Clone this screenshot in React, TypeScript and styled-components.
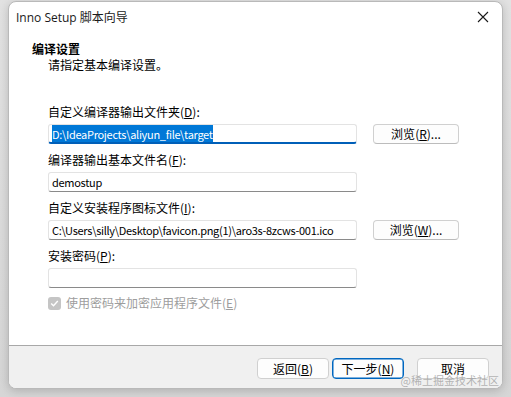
import React from 'react';
import styled, { createGlobalStyle } from 'styled-components';

const GlobalStyle = createGlobalStyle`
  html, body {
    margin: 0;
    padding: 0;
    background: #dadada;
  }
  body {
    font-family: 'Noto Sans CJK SC', 'Noto Sans', sans-serif;
    font-size: 12px;
    color: #000;
  }
`;

interface Field {
  label: string;
  key: string;
  value: string;
  selected?: boolean;
  browse?: string;
  browseKey?: string;
}

const fields: Field[] = [
  { label: '自定义编译器输出文件夹', key: 'D', value: 'D:\\IdeaProjects\\aliyun_file\\target', selected: true, browse: '浏览', browseKey: 'R' },
  { label: '编译器输出基本文件名', key: 'F', value: 'demostup' },
  { label: '自定义安装程序图标文件', key: 'I', value: 'C:\\Users\\silly\\Desktop\\favicon.png(1)\\aro3s-8zcws-001.ico', browse: '浏览', browseKey: 'W' },
  { label: '安装密码', key: 'P', value: '' },
];

export default function App() {
  return (
    <Screen>
      <GlobalStyle />
      <Window>
        <TitleBar>
          <TitleText>Inno Setup 脚本向导</TitleText>
          <CloseIcon width="12" height="12" viewBox="0 0 12 12">
            <path d="M1 1 L11 11 M11 1 L1 11" stroke="#1a1a1a" strokeWidth="1.1" fill="none" />
          </CloseIcon>
        </TitleBar>

        <Body>
          <Heading>编译设置</Heading>
          <SubHeading>请指定基本编译设置。</SubHeading>

          <Form>
            {fields.map((f) => (
              <React.Fragment key={f.key}>
                <Label>
                  {f.label}(<u>{f.key}</u>):
                </Label>
                <span />
                <Input $focused={f.selected}>
                  {f.selected ? <Selection>{f.value}</Selection> : f.value}
                </Input>
                {f.browse ? (
                  <BrowseButton>
                    {f.browse}(<u>{f.browseKey}</u>)...
                  </BrowseButton>
                ) : (
                  <span />
                )}
              </React.Fragment>
            ))}
          </Form>

          <CheckRow>
            <CheckBox>
              <svg width="9" height="9" viewBox="0 0 9 9">
                <path d="M1.2 4.6 L3.5 6.8 L7.8 2" stroke="#fff" strokeWidth="1.4" fill="none" />
              </svg>
            </CheckBox>
            <CheckLabel>
              使用密码来加密应用程序文件(<u>E</u>)
            </CheckLabel>
          </CheckRow>
        </Body>

        <Footer>
          <FooterButton>
            返回(<u>B</u>)
          </FooterButton>
          <FooterButton $primary>
            下一步(<u>N</u>)
          </FooterButton>
          <FooterButton $last>取消</FooterButton>
          <Watermark>@稀土掘金技术社区</Watermark>
        </Footer>
      </Window>
    </Screen>
  );
}

const Screen = styled.div`
  width: 511px;
  height: 397px;
  padding: 1px 8px 0 8px;
  box-sizing: border-box;
  background: linear-gradient(180deg, #e2e2e2 0%, #d6d6d6 100%);
  overflow: hidden;
`;

const Window = styled.div`
  position: relative;
  width: 495px;
  height: 388px;
  background: #fff;
  border-radius: 8px;
  border: 1px solid #b9b9b9;
  box-sizing: border-box;
  box-shadow: 0 2px 10px rgba(0, 0, 0, 0.18);
  display: flex;
  flex-direction: column;
  overflow: hidden;
`;

const TitleBar = styled.div`
  height: 29px;
  display: flex;
  align-items: center;
  justify-content: space-between;
  padding: 0 10px 0 7px;
  flex-shrink: 0;
`;

const TitleText = styled.span`
  font-family: 'Open Sans', 'Noto Sans CJK SC', sans-serif;
  font-size: 12px;
  color: #1a1a1a;
`;

const CloseIcon = styled.svg`
  margin-right: 3px;
`;

const Body = styled.div`
  flex: 1;
  padding: 10px 0 0 23px;
`;

const Heading = styled.div`
  font-weight: bold;
  font-size: 12px;
  line-height: 16px;
`;

const SubHeading = styled.div`
  font-size: 12px;
  line-height: 16px;
  padding-left: 16px;
`;

const Form = styled.div`
  margin-top: 31px;
  padding-left: 16px;
  display: grid;
  grid-template-columns: 309px 86px;
  column-gap: 16px;
  row-gap: 0;
`;

const Label = styled.div`
  line-height: 16px;
  margin-bottom: 4px;
  white-space: nowrap;

  u {
    text-decoration-thickness: 1px;
    text-underline-offset: 1px;
  }
`;

const Input = styled.div<{ $focused?: boolean }>`
  height: 20px;
  box-sizing: border-box;
  border: 1px solid #e3e3e3;
  border-bottom: ${(p) => (p.$focused ? '2px solid #005fb8' : '1px solid #8a8a8a')};
  border-radius: 3px;
  padding: 0 3px;
  font-size: 11px;
  letter-spacing: -0.3px;
  line-height: 18px;
  white-space: nowrap;
  overflow: hidden;
  margin-bottom: 8px;
  background: #fff;
`;

const Selection = styled.span`
  background: #0078d7;
  color: #fff;
  padding: 1px 0;
`;

const BrowseButton = styled.div`
  height: 20px;
  box-sizing: border-box;
  border: 1px solid #d0d0d0;
  border-bottom-color: #bcbcbc;
  border-radius: 4px;
  background: #fdfdfd;
  text-align: center;
  line-height: 18px;
`;

const CheckRow = styled.div`
  display: flex;
  align-items: center;
  gap: 5px;
  padding-left: 16px;
  margin-top: -1px;
`;

const CheckBox = styled.div`
  width: 13px;
  height: 13px;
  border-radius: 3px;
  background: #c5c5c5;
  display: flex;
  align-items: center;
  justify-content: center;
`;

const CheckLabel = styled.span`
  color: #9d9d9d;
  line-height: 16px;
`;

const Footer = styled.div`
  position: relative;
  height: 43px;
  box-sizing: border-box;
  flex-shrink: 0;
  background: #f0f0f0;
  border-top: 1px solid #a8a8a8;
  display: flex;
  align-items: flex-start;
  justify-content: flex-end;
  padding: 12px 13px 0 0;
`;

const FooterButton = styled.div<{ $primary?: boolean; $last?: boolean }>`
  width: 72px;
  height: 21px;
  box-sizing: border-box;
  border: 1px solid ${(p) => (p.$primary ? '#0067c0' : '#d0d0d0')};
  box-shadow: ${(p) => (p.$primary ? 'inset 0 0 0 0.5px #0067c0' : 'none')};
  border-radius: 4px;
  background: #fdfdfd;
  text-align: center;
  line-height: 19px;
  margin-left: ${(p) => (p.$last ? '13px' : '3px')};
`;

const Watermark = styled.span`
  position: absolute;
  right: 3px;
  bottom: 1px;
  font-size: 11px;
  line-height: 14px;
  color: rgba(150, 150, 150, 0.7);
`;
